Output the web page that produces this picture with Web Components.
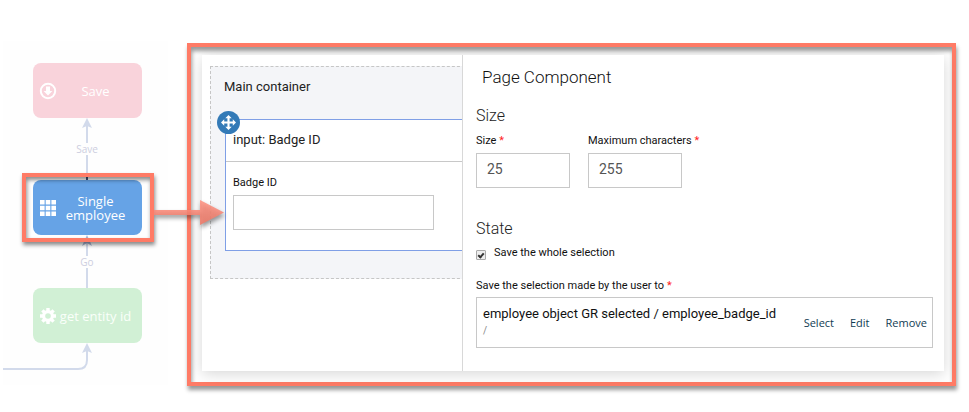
<!DOCTYPE html>
<html lang="en">
<head>
<meta charset="utf-8">
<title>Page Component</title>
<style>
body { margin: 0; background: #fff; font-family: Roboto, "Liberation Sans", sans-serif; color: #222; }
</style>
</head>
<body>
<component-guide></component-guide>
<script>
const define = (name, html, setup) => customElements.define(name, class extends HTMLElement {
  constructor() {
    super();
    const t = document.createElement('template');
    t.innerHTML = html;
    this.attachShadow({ mode: 'open' }).append(t.content.cloneNode(true));
  }
  connectedCallback() { if (setup) setup(this, this.shadowRoot); }
});

define('flow-node', `
<style>
:host { display: flex; align-items: center; box-sizing: border-box; width: 109px; height: 55px; padding: 0 8px 0 6px;
  border-radius: 8px; background: var(--node); color: #fff; font: 13px/14px "Open Sans", "Noto Sans", sans-serif; }
.label { flex: 1; text-align: center; white-space: nowrap; }
::slotted(svg) { flex: none; display: block; }
</style>
<slot name="icon"></slot><span class="label"><slot></slot></span>`);

define('flow-diagram', `
<style>
:host { display: block; position: relative; min-height: 412px; }
.sheet { position: absolute; inset: 41px 19px 27px 3px; background: #fefefe; }
.links { position: absolute; left: 0; top: 0; }
flow-node, .tag, .focus, .pointer { position: absolute; }
.save { left: 33px; top: 63px; --node: #f9d3db; }
.single { left: 33px; top: 180px; --node: #66a3e6; }
.entity { left: 33px; top: 288px; --node: #d1f0d5; color: #fafffa; }
.tag { left: 67px; width: 40px; text-align: center; font: 10px/14px "Open Sans", sans-serif; color: #cdcee0; }
.t1 { top: 142px; } .t2 { top: 255px; }
.focus { left: 22px; top: 173px; width: 124px; height: 61px; border: 4px solid #ff7b66;
  box-shadow: 1px 3px 4px rgba(0,0,0,.45), inset 1px 3px 4px rgba(0,0,0,.45); }
.pointer { left: 154px; top: 196px; z-index: 2; }
</style>
<div class="sheet"></div>
<svg class="links" width="170" height="390" fill="none" stroke="#d2daeb" stroke-width="2">
  <path d="M87 180V155M87 143V124M87 288V268M87 256V240M3 369H78Q87 369 87 360V350"/>
  <path d="M87 175V181" stroke="#3f4c78"/>
  <path d="M87 118L92 128L87 126L82 128ZM87 343L92 353L87 351L82 353Z" fill="#d2daeb" stroke="none"/>
  <path d="M87 235L92 246L87 243L82 246Z" fill="#a9b6d6" stroke="none"/>
</svg>
<flow-node class="save"><svg slot="icon" width="18" height="18" viewBox="0 0 18 18"><circle cx="9" cy="9" r="7.2" fill="none" stroke="#fff" stroke-width="2"/><path d="M7 4.5h4V9h2.4L9 13.5 4.6 9H7z" fill="#fff"/></svg>Save</flow-node>
<flow-node class="single"><svg slot="icon" width="18" height="18" viewBox="0 0 18 18" fill="#fff"><path d="M1 1h4.600v4.600h-4.600zM6.700 1h4.600v4.600h-4.600zM12.400 1h4.600v4.600h-4.600zM1 6.700h4.600v4.600h-4.600zM6.700 6.700h4.600v4.600h-4.600zM12.400 6.700h4.600v4.600h-4.600zM1 12.400h4.600v4.600h-4.600zM6.700 12.400h4.600v4.600h-4.600zM12.400 12.400h4.600v4.600h-4.600z"/></svg>Single<br>employee</flow-node>
<flow-node class="entity"><svg slot="icon" width="18" height="18" viewBox="0 0 18 18"><g stroke="#fff" stroke-width="3.400"><path d="M9 1V17M1 9H17M3.400 3.400L14.600 14.600M14.600 3.400L3.400 14.600"/></g><circle cx="9" cy="9" r="6" fill="#fff"/><circle cx="9" cy="9" r="2.800" fill="#d1f0d5"/></svg>get entity id</flow-node>
<span class="tag t1">Save</span><span class="tag t2">Go</span>
<div class="focus"></div>
<svg class="pointer" width="78" height="40" viewBox="0 0 78 40">
  <defs><linearGradient id="g" x2="0" y2="1"><stop offset="0" stop-color="#ff9484"/><stop offset="1" stop-color="#ee7967"/></linearGradient></defs>
  <path d="M0 14H46V4L70 16.500L46 29V19H0Z" fill="url(#g)" fill-opacity=".88" style="filter:drop-shadow(1px 3px 2px rgba(0,0,0,.45))"/>
</svg>`);

define('text-field', `
<style>
:host { display: block; }
label { display: block; font-size: 11px; line-height: 14px; color: #111; white-space: nowrap; }
i { color: #f22; font-style: normal; }
input { display: block; box-sizing: border-box; width: 100%; height: 35px; margin: 5px 0 0; padding: 0 10px 3px;
  border: 1px solid #c8c8c8; border-radius: 0; background: #fff; font: 14px Roboto, sans-serif; color: #555; outline: 0; }
</style>
<label for="f"><slot></slot> <i hidden>*</i></label><input id="f" type="text">`,
(host, root) => {
  root.querySelector('input').value = host.getAttribute('value') || '';
  root.querySelector('i').hidden = !host.hasAttribute('required');
});

define('form-canvas', `
<style>
:host { display: block; overflow: hidden; padding: 11px 0 0 8px; }
.main { box-sizing: border-box; height: 213px; margin-right: -8px; padding: 12px 0 0 14px; border: 1px dashed #c6c6c6; background: #f4f5f8; }
.title { font-size: 13px; line-height: 16px; margin-left: -1px; }
.widget { position: relative; margin-top: 24px; height: 130px; border: 1px solid #7f9fe6; background: #fff; box-sizing: content-box; }
.head { padding: 12px 7px 13px; border-bottom: 1px solid #c8c8c8; font-size: 13px; line-height: 16px; }
text-field { width: 201px; margin: 14px 7px; }
button { position: absolute; left: -9px; top: -9px; width: 23px; height: 23px; padding: 0; border: 0; border-radius: 50%; background: #337ab7; }
svg { display: block; margin: auto; }
</style>
<section class="main">
  <div class="title">Main container</div>
  <div class="widget">
    <div class="head">input: Badge ID</div>
    <text-field>Badge ID</text-field>
    <button type="button" aria-label="Move"><svg width="15" height="15" viewBox="0 0 14 14" fill="#fff"><path d="M7 0l3 3H8v3h3V4l3 3-3 3V8H8v3h2l-3 3-3-3h2V8H3v2L0 7l3-3v2h3V3H4z"/></svg></button>
  </div>
</section>`);

define('selection-row', `
<style>
:host { display: flex; align-items: center; box-sizing: border-box; min-height: 51px; padding: 0 5px 2px 6px; border: 1px solid #c8c8c8; }
.value { flex: 1; font-size: 13px; line-height: 18px; color: #111; white-space: nowrap; }
small { display: block; font-size: 10px; line-height: 16px; color: #888; }
.actions { display: flex; gap: 16px; padding-top: 2px; }
button { padding: 0; border: 0; background: none; font: 11px/16px "Open Sans", sans-serif; color: #103c52; }
</style>
<div class="value"><slot></slot><small>/</small></div>
<div class="actions"><button type="button">Select</button><button type="button">Edit</button><button type="button">Remove</button></div>`);

define('component-settings', `
<style>
:host { display: block; box-sizing: border-box; padding: 12px 11px 23px 13px; border-left: 1px solid #d8d8d8; background: #fff; }
h1, h2 { margin: 0; font-weight: 300; font-size: 16px; line-height: 20px; color: #222; }
h1 { padding-left: 6px; font-size: 17px; color: #111; }
.size { margin-top: 19px; }
.fields { display: flex; gap: 18px; margin-top: 8px; }
text-field { width: 94px; }
.state { margin-top: 31px; }
.check, .caption { display: flex; align-items: center; font-size: 11px; line-height: 14px; color: #111; }
.check { margin-top: 7px; }
.check label { padding-left: 8px; }
input { appearance: none; width: 10px; height: 10px; margin: 3px 0 0; border: 1px solid #aaa; border-radius: 1px; box-sizing: border-box;
  background: #eee; display: grid; place-items: center; }
input:checked::before { content: ""; width: 6px; height: 4px; border: solid #333; border-width: 0 0 2px 2px; transform: rotate(-48deg); box-sizing: border-box; }
.caption { margin-top: 19px; }
i { color: #f22; font-style: normal; padding-left: 3px; }
selection-row { margin-top: 4px; }
</style>
<h1>Page Component</h1>
<h2 class="size">Size</h2>
<div class="fields"><text-field value="25" required>Size</text-field><text-field value="255" required>Maximum characters</text-field></div>
<h2 class="state">State</h2>
<div class="check"><input id="whole" type="checkbox" checked><label for="whole">Save the whole selection</label></div>
<div class="caption">Save the selection made by the user to <i>*</i></div>
<selection-row>employee object GR selected / employee_badge_id</selection-row>`);

define('detail-frame', `
<style>
:host { display: block; border: 4px solid #ff7b66; padding: 8px 8px 11px 11px;
  box-shadow: 1px 4px 4px rgba(0,0,0,.4), inset 1px 4px 4px rgba(0,0,0,.4); }
.panel { display: grid; grid-template-columns: 260px minmax(0, 1fr); background: #fff; box-shadow: 0 3px 14px rgba(0,0,0,.16); }
</style>
<div class="panel"><slot></slot></div>`);

define('component-guide', `
<style>
:host { display: grid; grid-template-columns: 187px minmax(0, 1fr); align-items: start; }
detail-frame { margin: 43px 13px 0 0; }
</style>
<flow-diagram></flow-diagram>
<detail-frame><form-canvas></form-canvas><component-settings></component-settings></detail-frame>`);
</script>
</body>
</html>
